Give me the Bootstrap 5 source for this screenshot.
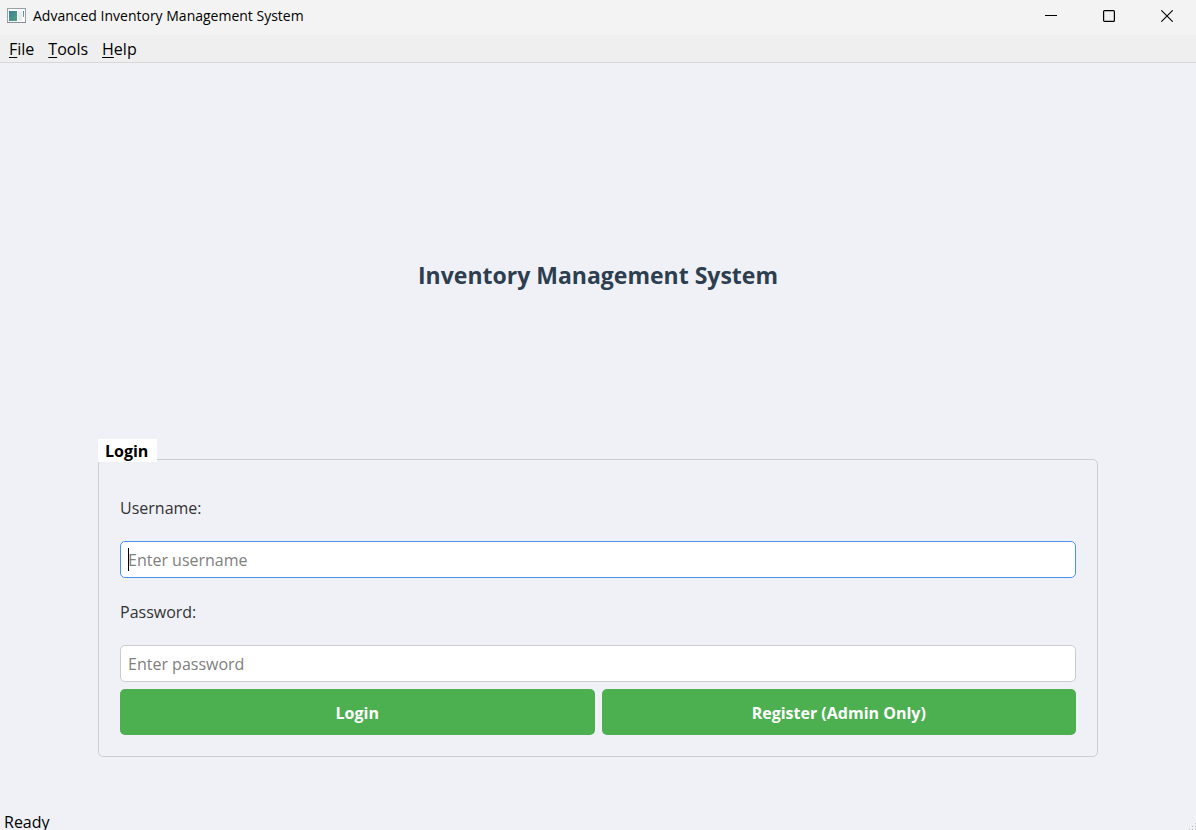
<!DOCTYPE html>
<html lang="en">
<head>
<meta charset="utf-8">
<meta name="viewport" content="width=device-width, initial-scale=1">
<title>Advanced Inventory Management System</title>
<link href="https://cdn.jsdelivr.net/npm/bootstrap@5.3.0/dist/css/bootstrap.min.css" rel="stylesheet">
<style>
  body { font-family: "Open Sans", "Noto Sans", sans-serif; font-size: 16px; line-height: 24px; background: #f0f1f6; color: #000; }
  .title-bar { height: 35px; background: #f3f3f3; padding-left: 7px; }
  .title-text { font-size: 14px; margin-left: 7px; }
  .win-btn { width: 58px; height: 32px; border: 0; background: transparent; padding: 0; display: flex; align-items: center; justify-content: center; }
  .menu-strip { height: 28px; background: #efefef; border-bottom: 1px solid #d7d7d7; padding: 2px 9px 0; gap: 14px; }
  .menu-strip a { color: #000; text-decoration: none; }
  .menu-strip u { text-underline-offset: 2px; }
  .login-page { padding: 48px 98px 52px; }
  .page-title { font-size: 23px; font-weight: 700; line-height: 32px; color: #2c3e50; }
  .group-title { font-size: 16px; font-weight: 700; line-height: 21px; padding: 2px 9px 0 7px; background: #fff; margin-bottom: -3px; }
  .group-frame { border: 1px solid #cdced0; border-radius: 5px; padding: 21px; gap: 7px; }
  .field-label { line-height: 51px; padding-top: 2px; color: #333; }
  .field-input { height: 37px; padding: 0 7px; line-height: 24px; font-size: 16px; border: 1px solid #ccc; border-radius: 5px; background: #fff; color: #000; }
  .field-input.current { border-color: #4a90f0; }
  .field-input::placeholder { color: #808080; opacity: 1; }
  .text-caret { left: 8px; top: 7px; width: 1px; height: 23px; background: #000; }
  .button-row { gap: 7px; }
  .action-btn { height: 46px; border: 0; border-radius: 5px; background: #4caf50; color: #fff; font-weight: 700; flex: 1 1 0; padding: 2px 0 0; }
  .action-btn:hover { background: #45a049; color: #fff; }
  .status-strip { height: 21px; line-height: 26px; padding-left: 4px; }
</style>
</head>
<body class="vh-100 d-flex flex-column overflow-hidden">
<header>
  <div class="title-bar d-flex align-items-start">
    <div class="d-flex align-items-center pt-1">
      <svg width="19" height="16" viewBox="0 0 19 16" aria-hidden="true">
        <defs><linearGradient id="pane" x1="0" y1="0" x2="1" y2="1"><stop offset="0" stop-color="#3f7fa0"/><stop offset="1" stop-color="#4fa37a"/></linearGradient>
        <linearGradient id="bar" x1="0" y1="0" x2="0" y2="1"><stop offset="0" stop-color="#3c7fb0"/><stop offset="1" stop-color="#6fb584"/></linearGradient></defs>
        <rect x=".5" y=".5" width="18" height="14" fill="#fbfbfb" stroke="#9aa0a8"/>
        <path d="M0 14.5h19" stroke="#858b92"/>
        <rect x="2" y="3" width="8" height="10" fill="url(#pane)"/>
        <rect x="11" y="3" width="4" height="10" fill="#ececec"/>
        <rect x="16" y="3" width="1" height="6" fill="url(#bar)"/>
      </svg>
      <span class="title-text">Advanced Inventory Management System</span>
    </div>
    <div class="d-flex ms-auto">
      <button type="button" class="win-btn" aria-label="Minimize"><svg width="12" height="12"><path d="M0 5.5h12" stroke="#000"/></svg></button>
      <button type="button" class="win-btn" aria-label="Maximize"><svg width="12" height="12"><rect x=".6" y=".6" width="10.8" height="10.8" rx="1" fill="none" stroke="#000" stroke-width="1.2"/></svg></button>
      <button type="button" class="win-btn" aria-label="Close"><svg width="12" height="12"><path d="M.3.3l11.4 11.4M11.7.3L.3 11.7" stroke="#000" stroke-width="1.1"/></svg></button>
    </div>
  </div>
  <nav class="menu-strip d-flex" aria-label="Menu">
    <a href="#"><u>F</u>ile</a>
    <a href="#"><u>T</u>ools</a>
    <a href="#"><u>H</u>elp</a>
  </nav>
</header>
<main class="login-page flex-grow-1 d-flex flex-column">
  <div class="flex-grow-1 d-flex align-items-center justify-content-center">
    <h1 class="page-title m-0">Inventory Management System</h1>
  </div>
  <form>
    <fieldset>
      <legend class="group-title float-none w-auto d-table position-relative">Login</legend>
      <div class="group-frame d-flex flex-column">
        <label class="field-label" for="username">Username:</label>
        <div class="position-relative d-flex">
          <input class="form-control field-input current" type="text" id="username" placeholder="Enter username">
          <span class="text-caret position-absolute"></span>
        </div>
        <label class="field-label" for="password">Password:</label>
        <input class="form-control field-input" type="password" id="password" placeholder="Enter password">
        <div class="button-row d-flex">
          <button type="button" class="btn action-btn">Login</button>
          <button type="button" class="btn action-btn">Register (Admin Only)</button>
        </div>
      </div>
    </fieldset>
  </form>
</main>
<footer class="status-strip d-flex justify-content-between overflow-hidden">
  <span>Ready</span>
  <svg class="align-self-end" width="8" height="8" fill="#b8b8b8" aria-hidden="true"><path d="M7 1h1v1H7zM4 4h1v1H4zM7 4h1v1H7zM1 7h1v1H1zM4 7h1v1H4zM7 7h1v1H7z"/></svg>
</footer>
<script src="https://cdn.jsdelivr.net/npm/bootstrap@5.3.0/dist/js/bootstrap.bundle.min.js"></script>
</body>
</html>
